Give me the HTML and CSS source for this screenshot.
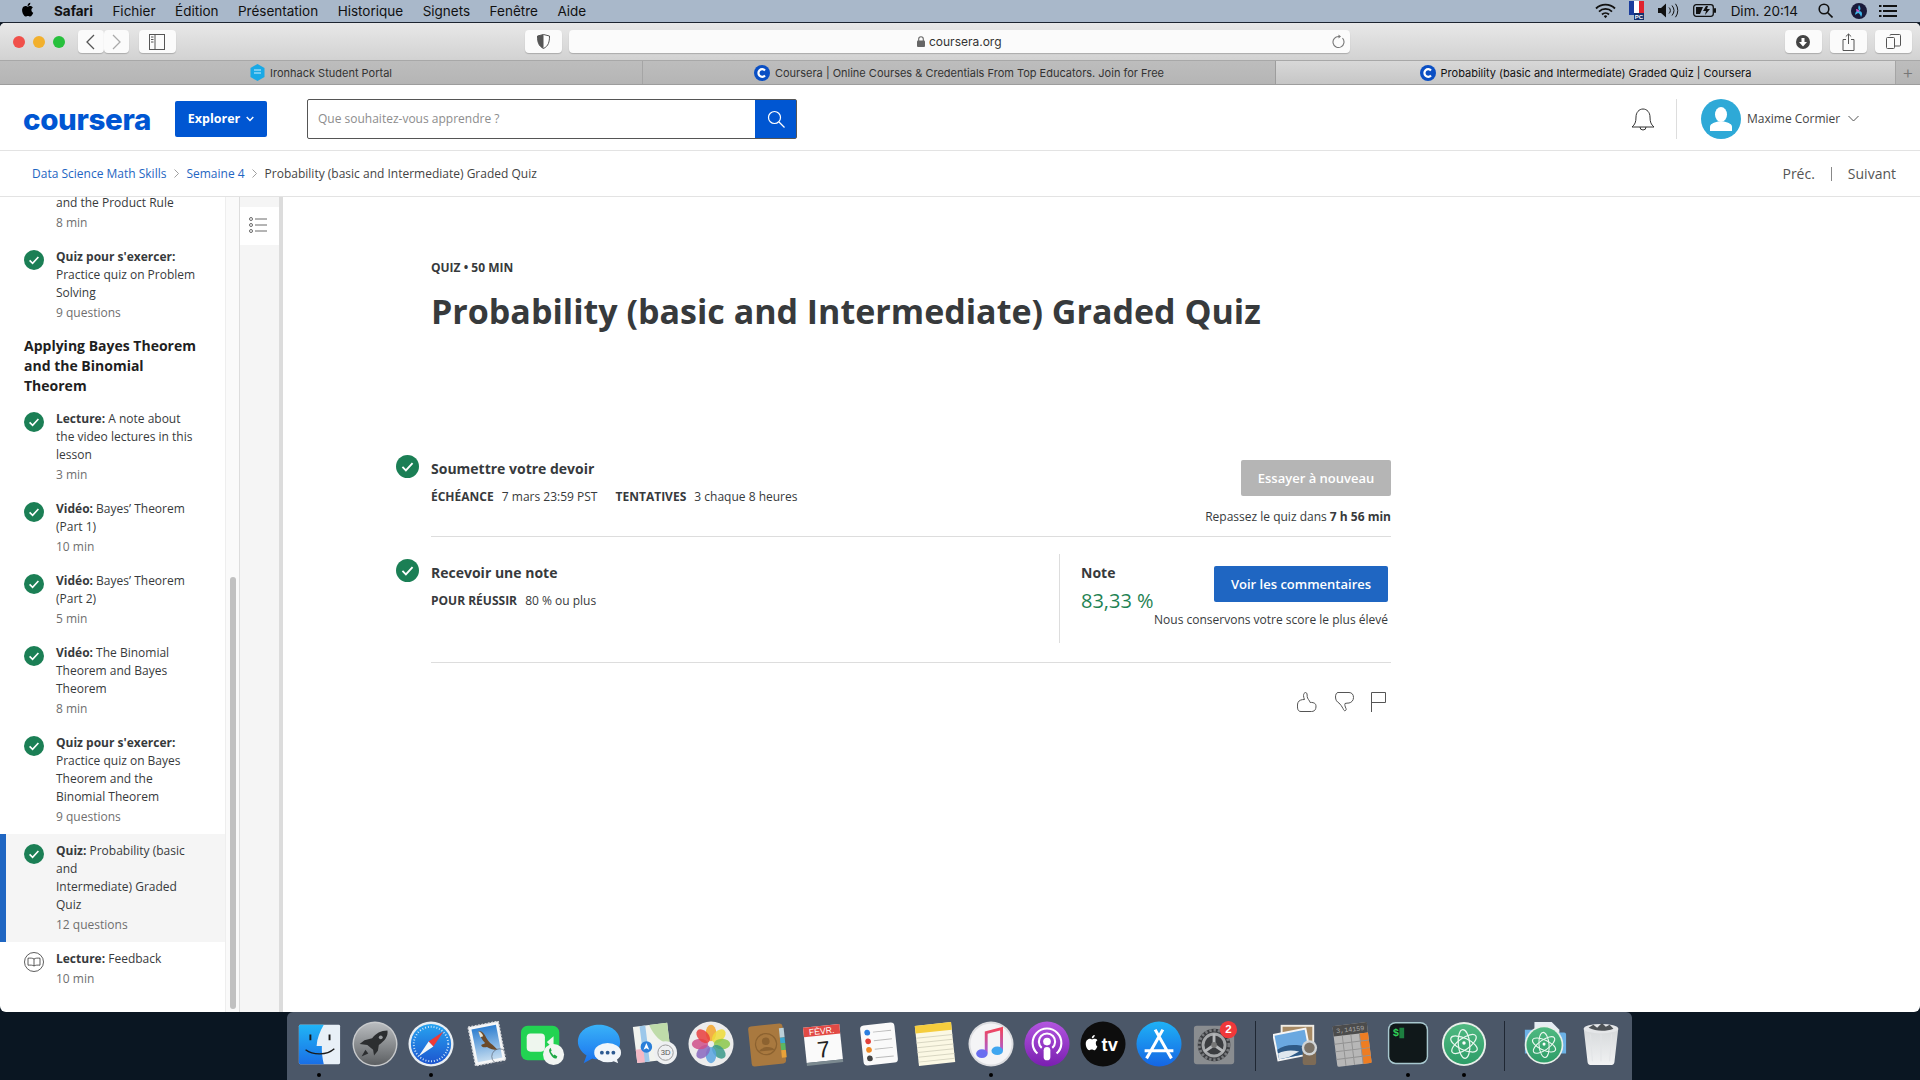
FILE: index.html
```html
<!DOCTYPE html>
<html lang="fr">
<head>
    <meta charset="utf-8">
    <title>Probability (basic and Intermediate) Graded Quiz | Coursera</title>
    <link rel="stylesheet" href="styles.css">
</head>
<body>
    <svg class="defs" width="0" height="0">
        <defs>
            <linearGradient id="g-rocket" x1="0" y1="0" x2="0" y2="1"><stop offset="0" stop-color="#b9bcbf"/><stop offset="1" stop-color="#5c5f62"/></linearGradient>
            <linearGradient id="g-safari" x1="0" y1="0" x2="0" y2="1"><stop offset="0" stop-color="#27a4f0"/><stop offset="1" stop-color="#1d55cf"/></linearGradient>
            <linearGradient id="g-finder" x1="0" y1="0" x2="0" y2="1"><stop offset="0" stop-color="#20b4f5"/><stop offset="1" stop-color="#1a6fe6"/></linearGradient>
            <linearGradient id="g-sky" x1="0" y1="0" x2="0" y2="1"><stop offset="0" stop-color="#2f7fd0"/><stop offset="1" stop-color="#c4dcf0"/></linearGradient>
            <linearGradient id="g-bubble" x1="0" y1="0" x2="0" y2="1"><stop offset="0" stop-color="#39b2f8"/><stop offset="1" stop-color="#1a72ee"/></linearGradient>
            <linearGradient id="g-note" x1="0" y1="0" x2="0" y2="1"><stop offset="0" stop-color="#f2445c"/><stop offset="1" stop-color="#a65fd8"/></linearGradient>
            <linearGradient id="g-pod" x1="0" y1="0" x2="0" y2="1"><stop offset="0" stop-color="#b355e0"/><stop offset="1" stop-color="#7a1fb0"/></linearGradient>
            <linearGradient id="g-store" x1="0" y1="0" x2="0" y2="1"><stop offset="0" stop-color="#1fb2f6"/><stop offset="1" stop-color="#1565e4"/></linearGradient>
            <linearGradient id="g-atom" x1="0" y1="0" x2="0" y2="1"><stop offset="0" stop-color="#4fb981"/><stop offset="1" stop-color="#2e9d68"/></linearGradient>
            <linearGradient id="g-trash" x1="0" y1="0" x2="0" y2="1"><stop offset="0" stop-color="#d6d9db"/><stop offset="1" stop-color="#f1f2f3"/></linearGradient>
        </defs>
        <symbol id="done" viewBox="0 0 20 20">
            <circle cx="10" cy="10" r="10" fill="#1b7f55"/>
            <path d="M5.600 10.400l3 3 5.800-6.400" fill="none" stroke="#fff" stroke-width="1.600"/>
        </symbol>
        <symbol id="fav" viewBox="0 0 16 16">
            <circle cx="8" cy="8" r="8" fill="#0a4fc4"/>
            <path d="M11 5.400a3.800 3.800 0 1 0 0 5.200" fill="none" stroke="#fff" stroke-width="2.200"/>
        </symbol>
        <symbol id="atom" viewBox="0 0 48 48">
            <circle cx="24" cy="24" r="23" fill="#e8efe9"/>
            <circle cx="24" cy="24" r="21" fill="url(#g-atom)"/>
            <g fill="none" stroke="#eaf7ef" stroke-width="1.300">
                <ellipse cx="24" cy="24" rx="15" ry="6" transform="rotate(25 24 24)"/>
                <ellipse cx="24" cy="24" rx="15" ry="6" transform="rotate(-35 24 24)"/>
                <ellipse cx="24" cy="24" rx="15" ry="6" transform="rotate(85 24 24)"/>
            </g>
            <circle cx="24" cy="23" r="1.800" fill="#fff"/>
        </symbol>
    </svg>

    <div class="menubar">
        <div class="menu-left">
            <svg class="apple" viewBox="0 0 24 24"><path d="M17.050 12.040c-.03-2.600 2.120-3.850 2.220-3.910-1.210-1.770-3.090-2.010-3.760-2.040-1.600-.16-3.120.94-3.930.94-.81 0-2.060-.92-3.390-.89-1.740.03-3.350 1.010-4.250 2.570-1.810 3.140-.46 7.800 1.300 10.350.86 1.250 1.890 2.650 3.240 2.600 1.300-.05 1.790-.84 3.360-.84 1.570 0 2.010.84 3.390.81 1.400-.02 2.290-1.270 3.140-2.530.99-1.450 1.400-2.860 1.420-2.930-.03-.01-2.720-1.040-2.740-4.130zM14.460 4.400c.72-.87 1.200-2.080 1.070-3.290-1.030.04-2.290.69-3.030 1.560-.66.77-1.240 2-1.090 3.180 1.150.09 2.330-.59 3.050-1.450z"/></svg>
            <b>Safari</b>
            <span>Fichier</span>
            <span>Édition</span>
            <span>Présentation</span>
            <span>Historique</span>
            <span>Signets</span>
            <span>Fenêtre</span>
            <span>Aide</span>
        </div>
        <div class="menu-right">
            <svg width="21" height="16" viewBox="0 0 21 16" fill="none" stroke="#111" stroke-width="1.800"><path d="M1 5.500a13.500 13.500 0 0 1 19 0M4 8.600a9.200 9.200 0 0 1 13 0M7 11.500a5 5 0 0 1 7 0"/><path d="M8.800 13.200a2.400 2.400 0 0 1 3.400 0l-1.700 2z" fill="#111" stroke="none"/></svg>
            <svg class="flag" width="15" height="19" viewBox="0 0 15 19"><rect width="5" height="14" fill="#1a3c9c"/><rect x="5" width="5" height="14" fill="#fff"/><rect x="10" width="5" height="14" fill="#e0232e"/><rect x="5" y="12" width="10" height="7" fill="#14306e"/><text x="10" y="18" font-size="6" font-weight="700" fill="#fff" text-anchor="middle" font-family="Liberation Sans">PC</text></svg>
            <svg width="22" height="15" viewBox="0 0 22 15" fill="none" stroke="#111"><path d="M0 5h3l5-4.500v14l-5-4.500H0z" fill="#111" stroke="none"/><path d="M11 4.500a4 4 0 0 1 0 6M14 2.500a8 8 0 0 1 0 10M17.500 .8a11 11 0 0 1 0 13.400"/></svg>
            <svg width="23" height="13" viewBox="0 0 23 13"><rect x=".7" y=".7" width="19.600" height="11.600" rx="2.500" fill="none" stroke="#111" stroke-width="1.300"/><rect x="21" y="4" width="2" height="5" rx="1" fill="#111"/><path d="M3 3h7l-3 7H3zM13 2l-3 5h3l-1 4 5-6h-3l1-3z" fill="#111"/></svg>
            <span class="clock">Dim. 20:14</span>
            <svg class="mag" width="15" height="15" viewBox="0 0 15 15" fill="none" stroke="#111" stroke-width="1.600"><circle cx="6" cy="6" r="4.800"/><path d="M9.500 9.500l5 5"/></svg>
            <svg class="siri" width="16" height="16" viewBox="0 0 16 16"><circle cx="8" cy="8" r="8" fill="#1a1a3a"/><path d="M8 2c2 3 2 5 0 6 3 0 4 3 2 6-1-3-2-4-3-4 0 0-2 1-3 2 0-3 2-5 4-5-1-1-1-3 0-5z" fill="#3fb6e8"/><path d="M5 6c2 0 3 1 3 3-2 0-3-1-3-3z" fill="#d84fc0"/></svg>
            <svg class="list" width="18" height="12" viewBox="0 0 18 12" fill="#111"><rect width="2.500" height="2"/><rect x="4" width="14" height="2"/><rect y="5" width="2.500" height="2"/><rect x="4" y="5" width="14" height="2"/><rect y="10" width="2.500" height="2"/><rect x="4" y="10" width="14" height="2"/></svg>
        </div>
    </div>

    <div class="window">
        <div class="toolbar">
            <div class="lights">
                <i class="light red"></i>
                <i class="light yellow"></i>
                <i class="light green"></i>
            </div>
            <div class="nav-pair">
                <div class="tool tool-nav"><svg width="9" height="16" viewBox="0 0 9 16" fill="none" stroke="#555" stroke-width="1.300"><path d="M8 1L1 8l7 7"/></svg></div>
                <div class="tool tool-nav"><svg width="9" height="16" viewBox="0 0 9 16" fill="none" stroke="#aaa" stroke-width="1.300"><path d="M1 1l7 7-7 7"/></svg></div>
            </div>
            <div class="tool tool-side"><svg width="16" height="16" viewBox="0 0 16 16" fill="none" stroke="#555"><rect x=".5" y=".5" width="15" height="15"/><path d="M6 0v16M2 3h2.500M2 5.500h2.500M2 8h2.500"/></svg></div>
            <div class="tool tool-shield"><svg width="13" height="15" viewBox="0 0 13 15"><path d="M6.500.5l6 1.500c0 6-1 10-6 12.500C1.500 12 .5 8 .5 2z" fill="#fff" stroke="#555"/><path d="M6.500.5v14C1.500 12 .5 8 .5 2z" fill="#555"/></svg></div>
            <div class="address">
                <svg width="8" height="11" viewBox="0 0 8 11" fill="#666"><rect y="4.500" width="8" height="6.500" rx="1"/><path d="M1.700 5V3a2.300 2.300 0 0 1 4.600 0v2" fill="none" stroke="#666" stroke-width="1.100"/></svg>
                <span>coursera.org</span>
                <svg class="reload" width="13" height="15" viewBox="0 0 13 15" fill="none" stroke="#777" stroke-width="1.100"><path d="M10.500 4.200a5.500 5.500 0 1 1-3.500-1.700"/><path d="M6.500 .5l2.500 2-2.500 2" fill="#777" stroke="none"/></svg>
            </div>
            <div class="tool tool-right"><svg width="14" height="14" viewBox="0 0 14 14"><circle cx="7" cy="7" r="7" fill="#444"/><path d="M5.500 3h3v4h2.500l-4 4.500L3 7h2.500z" fill="#fff"/></svg></div>
            <div class="tool tool-right"><svg width="13" height="18" viewBox="0 0 13 18" fill="none" stroke="#555"><path d="M4 6.500H1v11h11v-11H9M6.500 11V1M3.800 3.500L6.500 1l2.700 2.500"/></svg></div>
            <div class="tool tool-right"><svg width="15" height="15" viewBox="0 0 15 15" fill="none" stroke="#555"><rect x=".5" y="3.500" width="8" height="11" rx="1"/><path d="M4 1.500a1 1 0 0 1 1-1h8.500a1 1 0 0 1 1 1V11a1 1 0 0 1-1 1H9"/></svg></div>
        </div>

        <div class="tabs">
            <div class="tab tab-one"><svg width="15" height="17" viewBox="0 0 15 17"><path d="M7.500 0l7 4v9l-7 4-7-4V4z" fill="#19a9e6"/><path d="M4 6h7M4 9h7" stroke="#cdefff"/></svg>Ironhack Student Portal</div>
            <div class="tab tab-two"><svg width="16" height="16"><use href="#fav"/></svg>Coursera | Online Courses &amp; Credentials From Top Educators. Join for Free</div>
            <div class="tab tab-active"><svg width="16" height="16"><use href="#fav"/></svg>Probability (basic and Intermediate) Graded Quiz | Coursera</div>
            <div class="tab tab-plus">+</div>
        </div>

        <header class="site-header">
            <div class="logo">coursera</div>
            <div class="explore">Explorer <svg width="8" height="6" viewBox="0 0 8 6" fill="none" stroke="#fff" stroke-width="1.400"><path d="M.7 1l3.300 3.500L7.300 1"/></svg></div>
            <div class="search">
                <span class="search-text">Que souhaitez-vous apprendre ?</span>
                <div class="search-btn"><svg width="18" height="18" viewBox="0 0 18 18" fill="none" stroke="#fff" stroke-width="1.200"><circle cx="7.500" cy="7.500" r="6"/><path d="M12 12l5.500 5.500"/></svg></div>
            </div>
            <svg class="bell" width="24" height="26" viewBox="0 0 24 26" fill="none" stroke="#333"><path d="M1 21c3-2.500 4-5 4-10 0-4.500 3-8 7-8s7 3.500 7 8c0 5 1 7.500 4 10z"/><path d="M9 21a3 3 0 0 0 6 0"/></svg>
            <div class="head-sep"></div>
            <div class="avatar"><svg width="40" height="40" viewBox="0 0 40 40" fill="#fff"><ellipse cx="20" cy="15.500" rx="6" ry="7.500"/><path d="M9 32v-4c0-3 3-4 8-5.500h6c5 1.500 8 2.500 8 5.500v4z"/></svg></div>
            <span class="user-name">Maxime Cormier</span>
            <svg class="user-caret" width="11" height="7" viewBox="0 0 11 7" fill="none" stroke="#555"><path d="M.5 1l5 5 5-5"/></svg>
        </header>

        <div class="crumbs">
            <a>Data Science Math Skills</a>
            <svg width="5" height="9" viewBox="0 0 5 9" fill="none" stroke="#888" stroke-width=".8"><path d="M.5.500l4 4-4 4"/></svg>
            <a>Semaine 4</a>
            <svg width="5" height="9" viewBox="0 0 5 9" fill="none" stroke="#888" stroke-width=".8"><path d="M.5.500l4 4-4 4"/></svg>
            <span>Probability (basic and Intermediate) Graded Quiz</span>
            <div class="pager"><span>Préc.</span><i></i><span>Suivant</span></div>
        </div>

        <div class="page">
            <aside class="sidebar">
                <div class="lesson">
                    <i class="lesson-icon"></i>
                    <div class="lesson-text">
                        <p>and the Product Rule</p>
                        <p class="meta">8 min</p>
                    </div>
                </div>
                <div class="lesson">
                    <svg class="lesson-icon"><use href="#done"/></svg>
                    <div class="lesson-text">
                        <p><b>Quiz pour s'exercer:</b><br>Practice quiz on Problem<br>Solving</p>
                        <p class="meta">9 questions</p>
                    </div>
                </div>
                <h3 class="lesson-head">Applying Bayes Theorem and the Binomial Theorem</h3>
                <div class="lesson">
                    <svg class="lesson-icon"><use href="#done"/></svg>
                    <div class="lesson-text">
                        <p><b>Lecture:</b> A note about<br>the video lectures in this<br>lesson</p>
                        <p class="meta">3 min</p>
                    </div>
                </div>
                <div class="lesson">
                    <svg class="lesson-icon"><use href="#done"/></svg>
                    <div class="lesson-text">
                        <p><b>Vidéo:</b> Bayes’ Theorem<br>(Part 1)</p>
                        <p class="meta">10 min</p>
                    </div>
                </div>
                <div class="lesson">
                    <svg class="lesson-icon"><use href="#done"/></svg>
                    <div class="lesson-text">
                        <p><b>Vidéo:</b> Bayes’ Theorem<br>(Part 2)</p>
                        <p class="meta">5 min</p>
                    </div>
                </div>
                <div class="lesson">
                    <svg class="lesson-icon"><use href="#done"/></svg>
                    <div class="lesson-text">
                        <p><b>Vidéo:</b> The Binomial<br>Theorem and Bayes<br>Theorem</p>
                        <p class="meta">8 min</p>
                    </div>
                </div>
                <div class="lesson">
                    <svg class="lesson-icon"><use href="#done"/></svg>
                    <div class="lesson-text">
                        <p><b>Quiz pour s'exercer:</b><br>Practice quiz on Bayes<br>Theorem and the<br>Binomial Theorem</p>
                        <p class="meta">9 questions</p>
                    </div>
                </div>
                <div class="lesson lesson-active">
                    <svg class="lesson-icon"><use href="#done"/></svg>
                    <div class="lesson-text">
                        <p><b>Quiz:</b> Probability (basic<br>and<br>Intermediate) Graded<br>Quiz</p>
                        <p class="meta">12 questions</p>
                    </div>
                </div>
                <div class="lesson">
                    <svg class="lesson-icon" viewBox="0 0 20 20" fill="none" stroke="#333" stroke-width=".8"><circle cx="10" cy="10" r="9.500"/><path d="M10 7c-1.500-1-3.500-1-6-.8v7c2.500-.2 4.500-.2 6 .8 1.500-1 3.500-1 6-.8v-7c-2.500-.2-4.500-.2-6 .8zM10 7v7"/></svg>
                    <div class="lesson-text">
                        <p><b>Lecture:</b> Feedback</p>
                        <p class="meta">10 min</p>
                    </div>
                </div>
            </aside>
            <div class="scroll-track"><div class="scroll-thumb"></div></div>
            <div class="side-tool">
                <div class="side-tool-btn"><svg width="18" height="16" viewBox="0 0 18 16" fill="none" stroke="#444" stroke-width=".8"><circle cx="2" cy="2" r="1.500"/><circle cx="2" cy="8" r="1.500"/><circle cx="2" cy="14" r="1.500"/><path d="M6 2h12M6 8h12M6 14h12"/></svg></div>
            </div>

            <main class="content">
                <div class="kicker">QUIZ • 50 MIN</div>
                <h1 class="title">Probability (basic and Intermediate) Graded Quiz</h1>

                <section class="step">
                    <svg class="step-icon"><use href="#done"/></svg>
                    <div class="step-body step-body-submit">
                        <div class="step-main">
                            <h4>Soumettre votre devoir</h4>
                            <p class="facts"><b>ÉCHÉANCE</b> 7 mars 23:59 PST <b class="second">TENTATIVES</b> 3 chaque 8 heures</p>
                        </div>
                        <div class="step-side">
                            <div class="btn btn-off">Essayer à nouveau</div>
                            <p class="retry">Repassez le quiz dans <b>7 h 56 min</b></p>
                        </div>
                    </div>
                </section>

                <section class="step">
                    <svg class="step-icon step-icon-grade"><use href="#done"/></svg>
                    <div class="step-body step-body-grade">
                        <div class="step-main step-main-grade">
                            <h4>Recevoir une note</h4>
                            <p class="facts"><b>POUR RÉUSSIR</b> 80 % ou plus</p>
                        </div>
                        <div class="grade">
                            <div class="grade-top">
                                <div>
                                    <h4>Note</h4>
                                    <div class="score">83,33 %</div>
                                </div>
                                <div class="btn btn-blue">Voir les commentaires</div>
                            </div>
                            <p class="keep">Nous conservons votre score le plus élevé</p>
                        </div>
                    </div>
                </section>

                <div class="feedback">
                    <svg width="20" height="20" viewBox="0 0 20 20" fill="none" stroke="#555"><path d="M1 10.500c-.7 1.500-.8 5.500 0 7.300.5 1.100 1.500 1.700 3 1.700h10.500c2 0 3.800-1 4.200-3 .5-2 .4-3.700-.5-4.700-1-1-3-1.600-5-1.300-.5-2-3-3.800-3-6 0-2-.2-3.800-1.500-4C7.500.3 6.500 2 6.500 3.500c0 1.500.5 3 1 4-2.500 0-5.500.5-6.500 3z"/></svg>
                    <svg width="19" height="20" viewBox="0 0 19 20" fill="none" stroke="#555"><path d="M3 .5h11c2.800 0 4.500 2 4.500 5s-2 5-4.500 5.500c-1 .2-3 0-4 .5-.5 1 0 3 1 5 .5 1 0 2-1 2.200-1 .2-1.500-1-2-2.200-1-2-2.500-4-4-5.500C2 10 .5 8 .5 5 .5 2.500 1.500.5 3 .5z"/></svg>
                    <svg width="15" height="20" viewBox="0 0 15 20" fill="none" stroke="#555"><path d="M.5 20V.5h14v10H.5"/></svg>
                </div>
            </main>
        </div>
    </div>

    <div class="desktop">
        <div class="dock">
            <div class="dock-item on"><svg viewBox="0 0 48 48"><rect x="3" y="4" width="43" height="41" rx="1.500" fill="#e8f0f7"/><path d="M4.500 4H29c-4 7-7 14-7.500 22H27c-.3 6 .5 13 2 19H4.500A1.500 1.500 0 0 1 3 43.500v-38A1.500 1.500 0 0 1 4.500 4z" fill="url(#g-finder)"/><path d="M15 14v6M35 14v6" stroke="#1a1a1a" stroke-width="2"/><path d="M10 30c8 6 22 6 30-1" fill="none" stroke="#1a1a1a" stroke-width="1.400"/></svg></div>
            <div class="dock-item"><svg viewBox="0 0 48 48"><circle cx="24" cy="24" r="23.500" fill="#c8cacc"/><circle cx="24" cy="24" r="22" fill="url(#g-rocket)"/><path d="M37 10c-7 0-12 3-16 8l-8 2-5 4 8 1 6 5 1 6 4-5 1-6c6-4 10-9 9-15zM14 30l-4 7 7-3z" fill="#2c2e30"/><circle cx="30" cy="17" r="2" fill="#9a9da0"/></svg></div>
            <div class="dock-item on"><svg viewBox="0 0 48 48"><circle cx="24" cy="24" r="23.500" fill="#e9eef2"/><circle cx="24" cy="24" r="21" fill="url(#g-safari)"/><circle cx="24" cy="24" r="18" fill="none" stroke="#cfe6fa" stroke-width="2" stroke-dasharray="1 2"/><path d="M37 11L21.500 21.500l5 5z" fill="#ee3a36"/><path d="M11 37l10.500-15.500 5 5z" fill="#f4f6f8"/></svg></div>
            <div class="dock-item"><svg viewBox="0 0 48 48"><g transform="rotate(-11 24 24)"><rect x="8" y="3" width="32" height="41" fill="#f6f7f8"/><rect x="8" y="3" width="32" height="41" fill="none" stroke="#d8dadd" stroke-width="1.500" stroke-dasharray="2 1.500"/><rect x="11" y="6" width="26" height="35" fill="url(#g-sky)"/></g><path d="M15 11c3-1 5 1 7 4 2 4 4 7 8 10l5 5c-4 0-8-1-11-3-3 1-6 0-6-2 2-1 3-1 4-2-3-3-5-7-7-12z" fill="#6b4a2a"/><path d="M15 11c2 0 4 2 5 5l-3 1z" fill="#ebe3cf"/><circle cx="37" cy="37" r="8" fill="none" stroke="#5a6370" stroke-opacity=".7"/></svg></div>
            <div class="dock-item"><svg viewBox="0 0 48 48"><rect x="1" y="5" width="40" height="36" rx="7" fill="#22d352"/><rect x="7" y="13" width="19" height="19" rx="4" fill="#eef6ee"/><path d="M28 22l7-6v13z" fill="#eef6ee"/><circle cx="35" cy="35" r="11" fill="#f2f5f2"/><path d="M31 29c-1 1-1 3 1 6s4 5 6 4l1-2-3-2-1 1-3-4 1-1-1-3z" fill="#1fa845"/></svg></div>
            <div class="dock-item"><svg viewBox="0 0 48 48"><path d="M24 4c12 0 22 7 22 18s-10 18-22 18c-3 0-5 0-7-1l-9 5 3-8C5 32 2 27 2 22 2 11 12 4 24 4z" fill="url(#g-bubble)"/><ellipse cx="33" cy="33" rx="14" ry="10" fill="#f2f6fa"/><path d="M37 41l7 3-2-6z" fill="#f2f6fa"/><g fill="#2c5a92"><circle cx="27" cy="33" r="2"/><circle cx="33" cy="33" r="2"/><circle cx="39" cy="33" r="2"/></g></svg></div>
            <div class="dock-item"><svg viewBox="0 0 48 48"><g transform="rotate(-7 20 22)"><rect x="3" y="4" width="36" height="38" fill="#f1f3ee"/><path d="M20 4h19v22c-9-2-15-10-19-22z" fill="#bfdcaa"/><path d="M10 4h6v38h-6z" fill="#9cc8ea"/><path d="M3 28h8v14H3z" fill="#f4b8c4"/></g><circle cx="15" cy="27" r="6" fill="#2a7fd9"/><path d="M15 23l3 7-3-1.500-3 1.500z" fill="#fff"/><circle cx="35" cy="33" r="12" fill="#eef0f2"/><circle cx="35" cy="33" r="8" fill="none" stroke="#999"/><text x="35" y="36" font-size="8" text-anchor="middle" fill="#555" font-family="Liberation Sans">3D</text></svg></div>
            <div class="dock-item"><svg viewBox="0 0 48 48"><circle cx="24" cy="24" r="23.500" fill="#ececec"/><g fill-opacity=".85"><ellipse cx="24" cy="12.500" rx="5.500" ry="8.500" fill="#f4a62a"/><ellipse cx="24" cy="12.500" rx="5.500" ry="8.500" fill="#eedc3a" transform="rotate(45 24 24)"/><ellipse cx="24" cy="12.500" rx="5.500" ry="8.500" fill="#8cc84b" transform="rotate(90 24 24)"/><ellipse cx="24" cy="12.500" rx="5.500" ry="8.500" fill="#3b9a8a" transform="rotate(135 24 24)"/><ellipse cx="24" cy="12.500" rx="5.500" ry="8.500" fill="#5aa5e0" transform="rotate(180 24 24)"/><ellipse cx="24" cy="12.500" rx="5.500" ry="8.500" fill="#8a68c0" transform="rotate(225 24 24)"/><ellipse cx="24" cy="12.500" rx="5.500" ry="8.500" fill="#d0508a" transform="rotate(270 24 24)"/><ellipse cx="24" cy="12.500" rx="5.500" ry="8.500" fill="#e9403e" transform="rotate(315 24 24)"/></g></svg></div>
            <div class="dock-item"><svg viewBox="0 0 48 48"><g transform="rotate(-6 24 24)"><rect x="6" y="4" width="36" height="42" rx="3" fill="#a9793f"/><rect x="38" y="9" width="5" height="10" fill="#bcd0d8"/><rect x="38" y="19" width="5" height="6" fill="#3aa8d0"/><rect x="38" y="25" width="5" height="7" fill="#5cb860"/><rect x="38" y="32" width="5" height="8" fill="#e8a23a"/><circle cx="23" cy="24" r="11" fill="none" stroke="#8c6230" stroke-width="1.300"/><circle cx="23" cy="21" r="4" fill="#8c6230"/><path d="M15 31c2-5 14-5 16 0z" fill="#8c6230"/></g></svg></div>
            <div class="dock-item"><svg viewBox="0 0 48 48"><g transform="rotate(-6 24 24)"><rect x="5" y="5" width="38" height="37" fill="#fafafa"/><rect x="5" y="5" width="38" height="10" fill="#e24a45"/><path d="M5 43.500h38" stroke="#7c8a90" stroke-width="3"/><text x="24" y="13.500" font-size="9" fill="#fff" text-anchor="middle" font-family="Liberation Sans">FÉVR.</text><text x="24" y="38" font-size="24" fill="#222" text-anchor="middle" font-family="Liberation Sans">7</text></g></svg></div>
            <div class="dock-item"><svg viewBox="0 0 48 48"><g transform="rotate(-6 24 24)"><rect x="6" y="3" width="36" height="42" rx="4" fill="#fafafa"/><circle cx="13" cy="11" r="3" fill="#2a7fe0"/><circle cx="13" cy="20" r="3" fill="#e2403a"/><circle cx="13" cy="29" r="3" fill="#f08a24"/><circle cx="13" cy="38" r="3" fill="#444"/><path d="M19 11h19M19 20h19M19 29h19M19 38h19" stroke="#bbb"/></g></svg></div>
            <div class="dock-item"><svg viewBox="0 0 48 48"><g transform="rotate(-6 24 24)"><rect x="5" y="3" width="38" height="42" fill="#fbf8e4"/><rect x="5" y="3" width="38" height="8" fill="#f5cd3d"/><path d="M5 16h38M5 21h38M5 26h38M5 31h38M5 36h38M5 41h38" stroke="#d8d6c2"/></g></svg></div>
            <div class="dock-item on"><svg viewBox="0 0 48 48"><circle cx="24" cy="24" r="23.500" fill="#dcdde0"/><circle cx="24" cy="24" r="21.500" fill="#f4f4f6"/><path d="M19 33V12l16-4v23" fill="none" stroke="url(#g-note)" stroke-width="3"/><ellipse cx="14.500" cy="34" rx="6" ry="4.500" fill="#6a6ef0"/><ellipse cx="30.500" cy="31" rx="6" ry="4.500" fill="#3fa6f0"/></svg></div>
            <div class="dock-item"><svg viewBox="0 0 48 48"><circle cx="24" cy="24" r="23.500" fill="url(#g-pod)"/><g fill="none" stroke="#fff" stroke-width="2.200"><path d="M14 34a15 15 0 1 1 20 0"/><path d="M18.500 28a8.500 8.500 0 1 1 11 0"/></g><circle cx="24" cy="21.500" r="4" fill="#fff"/><rect x="20.500" y="27" width="7" height="14" rx="3.500" fill="#fff"/></svg></div>
            <div class="dock-item"><svg viewBox="0 0 48 48"><circle cx="24" cy="24" r="23.500" fill="#0d0d0d"/><path d="M16.500 23c0-2 1.500-3 1.700-3-1-1.300-2.300-1.400-2.800-1.400-1.200-.1-2.200.7-2.800.7s-1.500-.7-2.500-.7C8.800 18.600 6 20 6 24c0 3 2 6.500 3.700 6.500 1 0 1.400-.7 2.600-.7s1.500.7 2.500.7c1.700 0 3.300-3.700 3.300-4-1.400-.5-1.600-2.500-1.600-3.500zM14.500 17c.6-.6 1-1.500.8-2.400-.8 0-1.700.5-2.200 1.100-.5.6-.9 1.500-.8 2.400.9.100 1.700-.5 2.200-1.100z" fill="#fff"/><text x="31" y="31" font-size="19" font-weight="700" fill="#fff" text-anchor="middle" font-family="Liberation Sans">tv</text></svg></div>
            <div class="dock-item"><svg viewBox="0 0 48 48"><circle cx="24" cy="24" r="23.500" fill="url(#g-store)"/><path d="M28 9L14 34M20 9l14 25M9 31h30M11 39l3-5M37 39l-3-5" stroke="#fff" stroke-width="3.200" fill="none"/></svg></div>
            <div class="dock-item"><svg viewBox="0 0 48 48"><rect x="2" y="5" width="42" height="40" rx="3" fill="#8a8d90"/><circle cx="23" cy="25" r="17" fill="#3b3d40"/><circle cx="23" cy="25" r="15.500" fill="none" stroke="#77797c" stroke-width="3" stroke-dasharray="2.500 2"/><circle cx="23" cy="25" r="11.500" fill="none" stroke="#a5a7a9" stroke-width="3"/><path d="M23 25V13M23 25l-10 7M23 25l10 7" stroke="#b5b7b9" stroke-width="3"/><circle cx="23" cy="25" r="3" fill="#777"/><circle cx="38" cy="9" r="9" fill="#f0383a"/><text x="38" y="13" font-size="12" font-weight="700" fill="#fff" text-anchor="middle" font-family="Liberation Sans">2</text></svg></div>
            <i class="dock-sep"></i>
            <div class="dock-item"><svg viewBox="0 0 48 48"><rect x="8" y="4" width="35" height="26" fill="#f0ece4"/><rect x="10" y="6" width="31" height="22" fill="#a78a64"/><g transform="rotate(-11 20 26)"><rect x="2" y="10" width="36" height="29" fill="#f5f5f5"/><rect x="4" y="12" width="32" height="25" fill="#6aa8e0"/><path d="M4 27c8-4 18-3 32 3v7H4z" fill="#2f5a86"/><path d="M4 31c8-2 14-1 22 2l-12 4H4z" fill="#dfe7ee"/></g><rect x="31" y="30" width="14" height="16" rx="3" fill="#7d6b56"/><circle cx="38" cy="28" r="8" fill="#d0d4d6"/><circle cx="38" cy="28" r="5.500" fill="#7b7368"/></svg></div>
            <div class="dock-item"><svg viewBox="0 0 48 48"><g transform="rotate(-7 24 24)"><rect x="6" y="3" width="36" height="43" rx="2" fill="#b7b7b7"/><rect x="6" y="3" width="36" height="11" fill="#4c4c4c"/><text x="24" y="11" font-size="7" fill="#aaa" text-anchor="middle" font-family="Liberation Mono">3,14159</text><rect x="33" y="14" width="9" height="32" fill="#ee7d22"/><path d="M15 14v32M24 14v32M33 14v32M6 22h36M6 30h36M6 38h36" stroke="#929292"/></g></svg></div>
            <div class="dock-item on"><svg viewBox="0 0 48 48"><rect x="3" y="1" width="42" height="44" rx="8" fill="#a8c8cf"/><rect x="4.500" y="2.500" width="39" height="41" rx="6.500" fill="#10181a"/><text x="8" y="16" font-size="11" font-weight="700" fill="#31d158" font-family="Liberation Mono">$</text><rect x="15" y="7" width="5" height="11" fill="#1d7f40"/></svg></div>
            <div class="dock-item on"><svg viewBox="0 0 48 48"><use href="#atom"/></svg></div>
            <i class="dock-sep"></i>
            <div class="dock-item"><svg viewBox="0 0 48 48"><path d="M13 1h18l8 8v10H13z" fill="#e6edf3"/><path d="M3 9h12l3 3h26a2 2 0 0 1 2 2v20H3z" fill="#6cb2e6"/><svg x="2" y="3" width="42" height="44" viewBox="0 0 48 48"><use href="#atom"/></svg></svg></div>
            <div class="dock-item"><svg viewBox="0 0 48 48"><path d="M6 8h36l-4 35c-.2 2-2 3-4 3H14c-2 0-3.800-1-4-3z" fill="url(#g-trash)"/><path d="M13 14l2 28M24 14v28M35 14l-2 28" stroke="#e2e4e6"/><ellipse cx="24" cy="8" rx="18" ry="5" fill="#e4e6e8"/><path d="M11 7l5-3 4 3 5-5 4 4 4-2 4 4c-8 3-18 3-26-1z" fill="#4d5256"/></svg></div>
        </div>
    </div>
</body>
</html>
```

FILE: styles.css
```css
* {
    box-sizing: border-box;
}

html, body {
    margin: 0;
    height: 100%;
}

body {
    width: 1920px;
    height: 1080px;
    overflow: hidden;
    display: flex;
    flex-direction: column;
    background-color: #0a1622;
    font-family: "Open Sans", sans-serif;
    color: #373a3c;
}

p, h1, h3, h4 {
    margin: 0;
}

.defs {
    position: absolute;
}

/* mac menu bar */
.menubar {
    height: 23px;
    flex: none;
    display: flex;
    justify-content: space-between;
    align-items: center;
    padding: 0 23px 1px 20px;
    background-color: #a9b8ca;
    border-bottom: 1px solid #1c2430;
    font-family: Inter, sans-serif;
    font-size: 13.5px;
    color: #111;
}

.menu-left, .menu-right {
    display: flex;
    align-items: center;
}

.menu-left {
    gap: 19.5px;
}

.menu-left b {
    font-weight: 700;
    margin-left: -1.5px;
}

.apple {
    width: 16px;
    height: 16px;
    margin-top: -2px;
}

.menu-right svg {
    margin-right: 13px;
}

.menu-right .flag {
    margin-right: 14px;
}

.clock {
    margin: 0 20px 0 2px;
    white-space: nowrap;
}

.menu-right .mag {
    margin-right: 18px;
}

.menu-right .siri {
    margin-right: 12px;
}

.menu-right .list {
    margin-right: 0;
}

/* safari window */
.window {
    height: 989px;
    flex: none;
    display: flex;
    flex-direction: column;
    background-color: #fff;
    border-radius: 5px 5px 6px 6px;
    overflow: hidden;
}

.toolbar {
    height: 37px;
    flex: none;
    display: flex;
    align-items: center;
    padding: 0 8px 0 13px;
    background: linear-gradient(#e8e8e8, #d2d2d2);
}

.lights {
    display: flex;
    gap: 8px;
    margin-right: 13px;
}

.light {
    width: 12px;
    height: 12px;
    border-radius: 50%;
}

.red { background-color: #f0504a; }
.yellow { background-color: #f2b02d; }
.green { background-color: #27c03c; }

.nav-pair {
    display: flex;
    margin-right: 10px;
}

.tool {
    height: 23px;
    display: flex;
    align-items: center;
    justify-content: center;
    background-color: #fbfbfb;
    border-radius: 4px;
    box-shadow: 0 1px 1px rgba(0, 0, 0, 0.2);
}

.tool-nav { width: 25.5px; }
.tool-side { width: 37px; margin-right: 349px; }
.tool-shield { width: 37px; margin-right: 7px; }
.tool-right { width: 37.5px; margin-left: 7.5px; }

.address {
    width: 781px;
    height: 23px;
    margin-right: 427.5px;
    display: flex;
    align-items: center;
    justify-content: center;
    gap: 4px;
    position: relative;
    background-color: #fbfbfb;
    border-radius: 4px;
    box-shadow: 0 1px 1px rgba(0, 0, 0, 0.2);
    font-family: Inter, sans-serif;
    font-size: 12px;
    color: #333;
}

.reload {
    position: absolute;
    right: 5px;
    top: 4px;
}

.tabs {
    height: 25px;
    flex: none;
    display: flex;
    border-top: 1px solid #a8a8a8;
    border-bottom: 1px solid #9d9d9d;
    font-family: Inter, sans-serif;
    font-size: 11px;
    color: #333;
}

.tab {
    display: flex;
    align-items: center;
    justify-content: center;
    gap: 5px;
    background: linear-gradient(#bdbdbd, #b5b5b5);
    white-space: nowrap;
}

.tab-one { width: 643px; border-right: 1px solid #a5a5a5; }
.tab-two { width: 633px; border-right: 1px solid #9d9d9d; }
.tab-active { width: 619px; background: linear-gradient(#d8d8d8, #c6c6c6); color: #111; }
.tab-plus { width: 25px; border-left: 1px solid #a5a5a5; font-size: 18px; font-weight: 300; color: #777; }

/* coursera header */
.site-header {
    height: 66px;
    flex: none;
    display: flex;
    align-items: center;
    padding: 2px 0 0 23px;
    border-bottom: 1px solid #e3e3e3;
}

.logo {
    width: 128px;
    margin-right: 24px;
    font-family: Inter, sans-serif;
    font-size: 29.5px;
    font-weight: 800;
    letter-spacing: -0.35px;
    line-height: 30px;
    white-space: nowrap;
    color: #0056d2;
}

.explore {
    width: 92px;
    height: 36px;
    margin-right: 40px;
    display: flex;
    align-items: center;
    justify-content: center;
    gap: 6px;
    background-color: #0056d2;
    border-radius: 2px;
    font-size: 12.5px;
    font-weight: 700;
    color: #fff;
}

.search {
    width: 490px;
    height: 40px;
    display: flex;
    justify-content: space-between;
    border: 1px solid #555;
    border-radius: 2px;
}

.search-text {
    padding-left: 10px;
    font-size: 12px;
    line-height: 38px;
    color: #8d8d8d;
}

.search-btn {
    width: 41px;
    display: flex;
    align-items: center;
    justify-content: center;
    background-color: #0056d2;
}

.bell {
    margin-left: 834px;
    margin-right: 21px;
}

.head-sep {
    width: 1px;
    height: 40px;
    margin-right: 24px;
    background-color: #ddd;
}

.avatar {
    width: 40px;
    height: 40px;
    margin-right: 6px;
    border-radius: 50%;
    overflow: hidden;
    background-color: #2ea9d7;
}

.user-name {
    font-size: 12px;
    color: #444;
    margin-right: 8px;
}

.crumbs {
    height: 46px;
    flex: none;
    display: flex;
    align-items: center;
    gap: 7.5px;
    padding: 0 24px 0 32px;
    border-bottom: 1px solid #e3e3e3;
    font-size: 12px;
    color: #444;
}

.crumbs a {
    color: #1f66c2;
}

.pager {
    margin-left: auto;
    display: flex;
    align-items: center;
    gap: 16px;
    font-size: 14px;
    color: #555;
}

.pager i {
    width: 1px;
    height: 14px;
    background-color: #888;
}

/* body of the page */
.page {
    flex: 1;
    min-height: 0;
    display: flex;
}

.sidebar {
    width: 225px;
    flex: none;
    display: flex;
    flex-direction: column;
    justify-content: flex-end;
    overflow: hidden;
    padding-bottom: 16px;
    font-size: 12px;
    line-height: 18px;
}

.lesson {
    flex: none;
    display: flex;
    gap: 12px;
    padding: 8px 0 8px 24px;
}

.lesson-active {
    padding-left: 18px;
    border-left: 6px solid #1f66c2;
    background-color: #f5f5f5;
}

.lesson-icon {
    width: 20px;
    height: 20px;
    flex: none;
    margin-top: 2px;
}

.lesson-text b {
    font-weight: 700;
}

.meta {
    margin-top: 2px;
    color: #6f6f6f;
}

.lesson-head {
    flex: none;
    padding: 6px 20px 6px 24px;
    font-size: 14px;
    font-weight: 700;
    line-height: 20px;
    color: #1f1f1f;
}

.scroll-track {
    width: 15px;
    flex: none;
    padding: 380px 3px 3px 4px;
    background-color: #fafafa;
    border-left: 1px solid #eee;
    border-right: 1px solid #ddd;
}

.scroll-thumb {
    height: 100%;
    background-color: #c1c1c1;
    border-radius: 4px;
}

.side-tool {
    width: 43px;
    flex: none;
    padding-top: 10px;
    background-color: #f5f5f5;
    border-right: 4px solid #dcdcdc;
}

.side-tool-btn {
    height: 38px;
    display: flex;
    align-items: center;
    justify-content: center;
    padding: 0 3px 2px 0;
    background-color: #fff;
}

.content {
    width: 995px;
    margin-left: 113px;
    padding-top: 63px;
}

.kicker {
    margin-left: 35px;
    font-size: 12px;
    font-weight: 700;
    line-height: 16px;
}

.title {
    margin: 13px 0 126px 35px;
    font-size: 34px;
    font-weight: 700;
    line-height: 44px;
    white-space: nowrap;
}

.step {
    display: flex;
}

.step-icon {
    width: 23px;
    height: 23px;
    flex: none;
    margin: -4px 12px 0 0;
}

.step-icon-grade {
    margin-top: 22px;
}

.step-body {
    flex: 1;
    display: flex;
    border-bottom: 1px solid #ddd;
}

.step-body-submit {
    padding-bottom: 11px;
}

.step-body-grade {
    padding: 17px 0 19px;
}

.step-main {
    flex: 1;
}

.step-main-grade {
    padding-top: 9px;
}

.step h4 {
    font-size: 14px;
    font-weight: 700;
    line-height: 20px;
}

.facts {
    margin-top: 10px;
    font-size: 12px;
    line-height: 16px;
}

.facts b {
    margin-right: 5px;
}

.facts .second {
    margin-left: 15px;
}

.step-side {
    display: flex;
    flex-direction: column;
    align-items: flex-end;
    padding-top: 1px;
}

.btn {
    height: 36px;
    display: flex;
    align-items: center;
    justify-content: center;
    border-radius: 2px;
    font-size: 13px;
    font-weight: 600;
    color: #fff;
}

.btn-off {
    width: 150px;
    background-color: #b5b5b5;
}

.btn-blue {
    width: 174px;
    margin-top: 3px;
    background-color: #1f66c2;
}

.retry {
    margin-top: 13px;
    font-size: 12px;
    line-height: 16px;
}

.grade {
    width: 332px;
    height: 89px;
    flex: none;
    padding: 9px 3px 0 21px;
    border-left: 1px solid #ddd;
}

.grade-top {
    display: flex;
    justify-content: space-between;
}

.score {
    margin-top: 6px;
    font-size: 20px;
    line-height: 24px;
    color: #1f8354;
}

.keep {
    margin-top: -1px;
    font-size: 12px;
    line-height: 16px;
    text-align: right;
}

.feedback {
    display: flex;
    justify-content: flex-end;
    gap: 17.5px;
    margin-top: 29px;
    padding-right: 5px;
}

/* dock */
.desktop {
    flex: 1;
    display: flex;
    padding-left: 287px;
}

.dock {
    width: 1345px;
    height: 68px;
    display: flex;
    gap: 10px;
    padding: 9px 0 0 9px;
    background-color: #4b5768;
    border-radius: 6px 6px 0 0;
}

.dock-item {
    width: 46px;
    flex: none;
    display: flex;
    flex-direction: column;
    align-items: center;
    gap: 6px;
}

.dock-item > svg {
    width: 46px;
    height: 46px;
    flex: none;
}

.dock-item::after {
    content: "";
    width: 4px;
    height: 4px;
    border-radius: 50%;
}

.dock-item.on::after {
    background-color: #000;
}

.dock-sep {
    width: 1px;
    height: 50px;
    margin: 0 7px;
    background-color: #1f2733;
}
```
